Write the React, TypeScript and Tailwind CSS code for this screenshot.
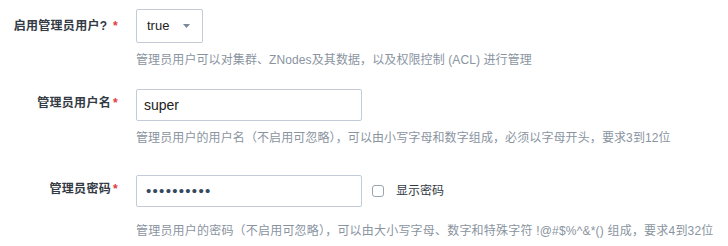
import { useState } from 'react'

const font = { fontFamily: '"Liberation Sans", "Noto Sans CJK SC", sans-serif' }

function Label({ text, star }: { text: string; star: string }) {
  return (
    <div className="w-[118px] shrink-0 text-right text-[12px] font-bold text-[#333a44] leading-[18px] tracking-[0.3px]">
      {text}
      <span className="ml-[2px] text-[#e4393c]">{star}</span>
    </div>
  )
}

export default function App() {
  const [show, setShow] = useState(false)

  return (
    <div className="w-[728px] h-[246px] bg-white overflow-hidden" style={font}>
      {/* 启用管理员用户 */}
      <div className="flex pt-[9px]">
        <div className="pt-[8px]">
          <Label text="启用管理员用户? " star="*" />
        </div>
        <div className="ml-[18px]">
          <div className="w-[67px] h-[34px] border border-[#c3ccd6] rounded-[2px] flex items-center pl-[10px] pr-[12px] justify-between">
            <span className="text-[13px] text-[#222]">true</span>
            <svg width="7" height="4" viewBox="0 0 7 4">
              <path d="M0 0 L7 0 L3.5 4 Z" fill="#7b8896" />
            </svg>
          </div>
          <p className="mt-[8px] text-[12px] leading-[18px] tracking-[0.1px] text-[#8a949f]">
            管理员用户可以对集群、ZNodes及其数据，以及权限控制 (ACL) 进行管理
          </p>
        </div>
      </div>

      {/* 管理员用户名 */}
      <div className="flex mt-[20px]">
        <div className="pt-[5px]">
          <Label text="管理员用户名" star="*" />
        </div>
        <div className="ml-[18px]">
          <div className="w-[226px] h-[32px] border border-[#c3ccd6] rounded-[2px] flex items-center pl-[7px] text-[14px] text-[#222]">
            super
          </div>
          <p className="mt-[8px] text-[12px] leading-[18px] tracking-[0.1px] text-[#8a949f]">
            管理员用户的用户名（不启用可忽略），可以由小写字母和数字组成，必须以字母开头，要求3到12位
          </p>
        </div>
      </div>

      {/* 管理员密码 */}
      <div className="flex mt-[28px]">
        <div className="pt-[5px]">
          <Label text="管理员密码" star="*" />
        </div>
        <div className="ml-[18px]">
          <div className="flex items-center">
            <div className="w-[226px] h-[32px] border border-[#c3ccd6] rounded-[2px] flex items-center pl-[9px] text-[15px] tracking-[1.3px] text-[#34495e]">
              {show ? 'superpass1' : '••••••••••'}
            </div>
            <label className="ml-[10px] flex items-center cursor-pointer">
              <input
                type="checkbox"
                checked={show}
                onChange={e => setShow(e.target.checked)}
                className="appearance-none w-[12px] h-[12px] border border-[#9aa4ae] rounded-[3px] bg-white"
              />
              <span className="ml-[12px] text-[12px] text-[#333a44]">显示密码</span>
            </label>
          </div>
          <p className="mt-[15px] text-[12px] leading-[18px] tracking-[0.2px] text-[#8a949f]">
            管理员用户的密码（不启用可忽略），可以由大小写字母、数字和特殊字符 !@#$%^&amp;*() 组成，要求4到32位
          </p>
        </div>
      </div>
    </div>
  )
}
